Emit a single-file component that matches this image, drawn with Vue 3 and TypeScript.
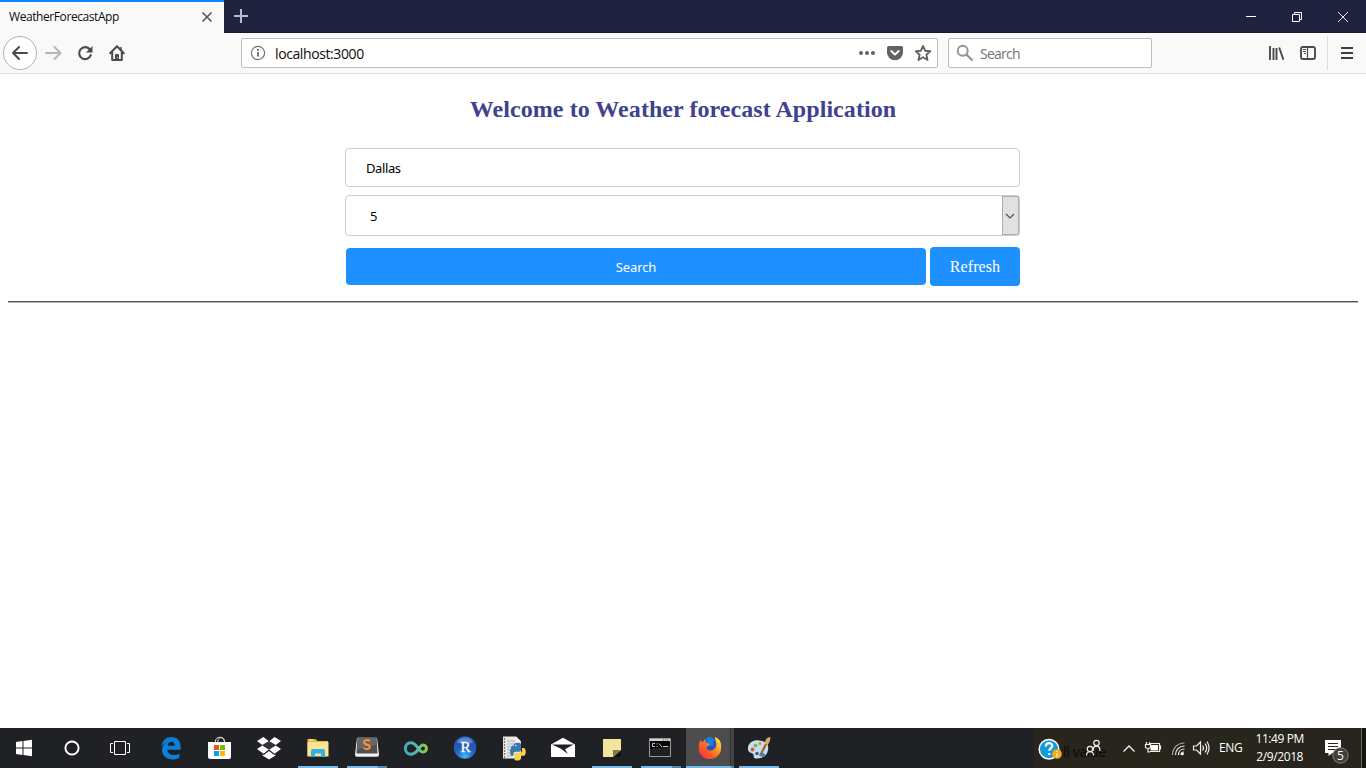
<script setup lang="ts">
import { ref } from 'vue'

interface TaskItem {
  name: string
  state?: 'open' | 'stacked' | 'active'
}

const city = ref('Dallas')
const days = ref('5')

const tasks: TaskItem[] = [
  { name: 'edge' },
  { name: 'store' },
  { name: 'dropbox' },
  { name: 'explorer', state: 'open' },
  { name: 'sublime', state: 'stacked' },
  { name: 'infinity' },
  { name: 'rstudio' },
  { name: 'python' },
  { name: 'mail' },
  { name: 'notes', state: 'open' },
  { name: 'terminal', state: 'stacked' },
  { name: 'firefox', state: 'active' },
  { name: 'paint', state: 'open' },
]
</script>

<template>
  <div class="screen">
    <header class="tabbar">
      <div class="tab">
        <span class="tab-title">WeatherForecastApp</span>
        <svg class="tab-close" width="12" height="12" viewBox="0 0 12 12"><path d="M1.500 1.500l9 9M10.500 1.500l-9 9" stroke="#55555a" stroke-width="1.600" /></svg>
      </div>
      <svg class="tab-new" width="32" height="33" viewBox="224 0 32 33"><path d="M234 16h14M241 9v14" stroke="#bcbcc6" stroke-width="2" /></svg>
      <svg class="window-buttons" width="138" height="33" viewBox="1228 0 138 33" fill="none" stroke="#fff">
        <path d="M1246 16.500h10M1292.500 14.500h7v7h-7zM1294.500 14.500v-2h7v7h-2" />
        <path d="M1338 12l10 10M1348 12l-10 10" stroke-width=".9" />
      </svg>
    </header>

    <nav class="toolbar">
      <svg class="nav-icons" width="241" height="40" viewBox="0 33 241 40" fill="none">
        <circle cx="20" cy="53" r="16.500" fill="#fff" stroke="#b1b1b3" />
        <path d="M27 53H13M19 47l-6 6 6 6" stroke="#4a4a4f" stroke-width="2" stroke-linejoin="round" stroke-linecap="round" />
        <path d="M46 53h14M54.500 47l6 6-6 6" stroke="#b5b5b7" stroke-width="2" stroke-linejoin="round" stroke-linecap="round" />
        <path d="M89.700 49.200A6 6 0 1 0 90.800 55.200" stroke="#4a4a4f" stroke-width="2.100" stroke-linecap="round" />
        <path d="M92.500 46v6.500h-6.500z" fill="#4a4a4f" />
        <path d="M110.200 53.200l6.800-6.900 6.800 6.900M112.200 52v8h9.600v-8" stroke="#4a4a4f" stroke-width="2" stroke-linejoin="round" stroke-linecap="round" />
        <path d="M115 61v-6q0-1 1-1h2q1 0 1 1v6z" fill="#4a4a4f" />
        <path d="M121 47v3" stroke="#4a4a4f" stroke-width="1.500" /><path d="M117 57.500h1" stroke="#ddd" />
      </svg>
      <div class="address">
        <svg width="32" height="28" viewBox="242 39 32 28"><circle cx="258" cy="53" r="6.600" fill="none" stroke="#737376" stroke-width="1.200" /><path d="M258 52v4.500M258 49v1.700" stroke="#666" stroke-width="1.800" /></svg>
        <span class="address-text">localhost:3000</span>
        <svg class="address-icons" width="87" height="28" viewBox="850 39 87 28">
          <g fill="#626266"><circle cx="861" cy="53" r="2" /><circle cx="867" cy="53" r="2" /><circle cx="873" cy="53" r="2" />
          <path d="M888.500 46h13q1.500 0 1.500 1.500v5a8 7.800 0 0 1-16 0v-5q0-1.500 1.500-1.500z" /></g>
          <path d="M891.300 51l3.700 3.600 3.700-3.600" fill="none" stroke="#fff" stroke-width="2" stroke-linecap="round" stroke-linejoin="round" />
          <path d="M923 46l2.100 4.700 5.100.6-3.800 3.400 1.100 5.300-4.500-2.700-4.500 2.700 1.100-5.300-3.800-3.400 5.100-.6z" fill="none" stroke="#626266" stroke-width="1.900" stroke-linejoin="round" />
        </svg>
      </div>
      <div class="searchbox">
        <svg width="31" height="28" viewBox="949 39 31 28" fill="none" stroke="#929295"><circle cx="962.700" cy="50.700" r="5" stroke-width="1.900" /><path d="M966.500 54.500l6 6" stroke-width="2.200" /></svg>
        <span>Search</span>
      </div>
      <svg class="right-icons" width="106" height="40" viewBox="1260 33 106 40">
        <path d="M1270 46v14M1273.500 48v12M1276.500 48v12M1279.200 47.500l4.200 12.300" fill="none" stroke="#4a4a4f" stroke-width="1.900" />
        <rect x="1301" y="47" width="14" height="12" rx="2" fill="none" stroke="#4a4a4f" stroke-width="1.900" />
        <path d="M1307.500 47v12" stroke="#4a4a4f" stroke-width="1.200" /><path d="M1303 49.500h3M1303 51.500h3M1304 53.500h2" stroke="#4a4a4f" />
        <path d="M1327.500 36v34" stroke="#dcdcdc" /><path d="M1341 48h12M1341 53h12M1341 58h12" stroke="#3e3e43" stroke-width="2" />
      </svg>
    </nav>

    <main class="page">
      <h2>Welcome to Weather forecast Application</h2>
      <form class="form" @submit.prevent>
        <input v-model="city" class="city" type="text" />
        <div class="select">
          <span>{{ days }}</span>
          <i class="select-arrow"><svg width="10" height="6" viewBox="0 0 10 6"><path d="M1 1l4 4 4-4" fill="none" stroke="#505050" stroke-width="1.200" /></svg></i>
        </div>
        <div class="actions">
          <button class="search" type="submit">Search</button>
          <a class="refresh">Refresh</a>
        </div>
      </form>
      <div class="rule"></div>
    </main>

    <footer class="taskbar">
      <svg class="system" width="147" height="40" viewBox="0 728 147 40">
        <path d="M16 742l6.500-1v6.500H16zM23.500 740.900l8.500-1.200v7.800h-8.500zM16 748.500h6.500v6.500l-6.500-1zM23.500 748.500h8.500v7.800l-8.500-1.200z" fill="#fff" />
        <circle cx="72" cy="748" r="6.600" fill="none" stroke="#fff" stroke-width="2" />
        <path d="M114.500 741.500h11v13h-11zM113 743.500h-2.500v9h2.500M127 743.500h2.500v9H127" fill="none" stroke="#fff" />
      </svg>
      <div v-for="task in tasks" :key="task.name" class="task" :class="task.state">
        <svg v-if="task.name === 'edge'" width="49" height="40" viewBox="147.7 728 49 40">
          <path d="M162 747c1-7 5-10 10-10 6 0 9.300 4 9.300 10v2.800h-13.200c.3 6 7.600 6.300 12 3.700v4.200c-8 4.200-17.300.5-17.300-7.500 0-4 2.600-7.200 6-8.600-3 .7-5 2.600-6.800 5.400zm6.200-1.300h7.200c0-5.700-6.500-5.100-7.200 0z" fill="#0a7fdb" />
        </svg>
        <svg v-else-if="task.name === 'store'" width="49" height="40" viewBox="196 728 49 40">
          <path d="M215.500 743v-2c0-5 9-5 9 0v2M218 743v-2c0-5 6-4 6 0" fill="none" stroke="#ddd" />
          <path d="M208 742h23v15q0 2-2 2h-19q-2 0-2-2z" fill="#fff" />
          <path d="M214 745h5v5h-5z" fill="#f25022" /><path d="M220 745h5v5h-5z" fill="#7fba00" /><path d="M214 751h5v5h-5z" fill="#00a4ef" /><path d="M220 751h5v5h-5z" fill="#ffb900" />
        </svg>
        <svg v-else-if="task.name === 'dropbox'" width="49" height="40" viewBox="245 728 49 40">
          <path d="M257 741l6.500-4 5.300 4.200-6.500 3.900zM281 741l-6.500-4-5.300 4.200 6.500 3.900zM257 749l5.300-3.500 6.500 4-5.300 4.200zM281 749l-5.300-3.500-6.500 4 5.300 4.200zM262.500 754.500l1.300.6 5.200-4.100 5.200 4.100 1.300-.6v1l-6.500 4-6.500-4z" fill="#fff" /><path d="M262.500 745.300l6.500-4 6.500 4-6.500 4z" fill="#33363a" />
        </svg>
        <svg v-else-if="task.name === 'explorer'" width="49" height="40" viewBox="294 728 49 40">
          <path d="M307.500 739h8l2 2h10.500v15h-20.500z" fill="#e8b63e" /><path d="M307.500 742h21v14.500h-21z" fill="#fde493" />
          <path d="M309 740h4" stroke="#fff4c0" /><path d="M311 757v-6q0-2 2-2h10q2 0 2 2v6h-4v-3.500h-6v3.500z" fill="#31b0e5" />
        </svg>
        <svg v-else-if="task.name === 'sublime'" width="49" height="40" viewBox="343 728 49 40">
          <path d="M357 738l-2 16.500q0 2.300 2 2.300h20q2 0 2-2.300l-2-16.500z" fill="#f1f1ef" /><path d="M357.500 737h19l1 16.500h-21z" fill="#505050" /><path d="M358 737.500h18l.4 7-19 5z" fill="#666" />
          <path d="M370.200 741c-3-1.700-6.200-1-6.200 1.100 0 3.300 6 1.900 5.900 4.900-.1 2.400-3.800 2.500-6.400 1" fill="none" stroke="#ff9434" stroke-width="2" />
        </svg>
        <svg v-else-if="task.name === 'infinity'" width="49" height="40" viewBox="392 728 49 40" fill="none" stroke-width="3">
          <defs><linearGradient id="loop"><stop stop-color="#42abc4" /><stop offset=".55" stop-color="#58bcae" /><stop offset="1" stop-color="#95c949" /></linearGradient></defs>
          <path d="M417 751c-2 2-3.600 3.300-6 3.300-7.500 0-7.500-11.600 0-11.600 6 0 7.500 9.300 12.200 9.300 4.300 0 4.300-7 0-7-2.400 0-4 3-6.200 6z" stroke="url(#loop)" />
        </svg>
        <svg v-else-if="task.name === 'rstudio'" width="49" height="40" viewBox="441 728 49 40">
          <defs><radialGradient id="ball" cx=".5" cy=".9"><stop stop-color="#49b9ff" /><stop offset=".55" stop-color="#2277d5" /><stop offset="1" stop-color="#2757b5" /></radialGradient></defs>
          <circle cx="465" cy="747.500" r="11.300" fill="url(#ball)" /><path d="M457 742c3-6 13-6 16 0-5 3-11 3-16 0z" fill="#71a6e3" opacity=".65" />
          <text x="465.500" y="752" text-anchor="middle" class="r-letter">R</text>
        </svg>
        <svg v-else-if="task.name === 'python'" width="49" height="40" viewBox="490 728 49 40">
          <path d="M503 736.500h13l5 5v17h-18z" fill="#e8e8e8" /><path d="M516 736.500v5h5z" fill="#fff" /><path d="M504.500 738v20" stroke="#777" stroke-width="1.200" stroke-dasharray="2 1" /><path d="M507 741h8M507 744h9M507 747h5M507 750h4M507 753h4M507 756h5" stroke="#b2b2b2" />
          <path d="M511 748c0-2 1-2.500 3-2.500v-1.800q4-2 7 0v6q0 2-2 2h-3.500q-2 0-2 2v2H511q-2-4 0-7.700z" fill="#397aae" /><path d="M522 748h2.500c2 3 1.500 5.700 0 7.700h-4v4q-4 1.700-6 0v-5q0-2 2-2h4q1.500 0 1.500-2z" fill="#ffd144" /><circle cx="515.800" cy="745.500" r=".7" fill="#fff" />
        </svg>
        <svg v-else-if="task.name === 'mail'" width="49" height="40" viewBox="539 728 49 40">
          <path d="M551 744.500l12-6.700 12 6.700V757h-24z" fill="#fff" /><path d="M552 744.500h21.500l-8.500 4.700 3 4.800-7-5.200z" fill="#202124" />
        </svg>
        <svg v-else-if="task.name === 'notes'" width="49" height="40" viewBox="588 728 49 40">
          <path d="M603 739h18v11l-8 7h-10z" fill="#f1e69c" /><path d="M613 750h8l-8 7z" fill="#807a4e" /><path d="M621 751v6h-7z" fill="#111315" />
        </svg>
        <svg v-else-if="task.name === 'terminal'" width="49" height="40" viewBox="637 728 49 40">
          <path d="M649.500 738.500h21v18h-21z" fill="#080808" stroke="#999" /><path d="M650 739h20v2h-20z" fill="#d2d2d2" /><path d="M663 740h6" stroke="#666" stroke-dasharray="1 1" /><path d="M650 749l20-3v10h-20z" fill="#202020" />
          <path d="M655 743.500h-2.500v3h2.500M657 743.500v1M657 746v1M659 743.500l3 3.500M663 746.500h5" fill="none" stroke="#d3d3d3" stroke-width=".9" />
        </svg>
        <svg v-else-if="task.name === 'firefox'" width="49" height="40" viewBox="686 728 49 40">
          <defs><linearGradient id="flame" x1="0" y1="1" x2="1" y2="0"><stop stop-color="#f2204f" /><stop offset=".45" stop-color="#ff6b20" /><stop offset=".8" stop-color="#ffc530" /><stop offset="1" stop-color="#fff044" /></linearGradient></defs>
          <circle cx="710" cy="747" r="9.500" fill="#2851b9" /><path d="M706 739c3-3 6-2 8 0l-1 7h-6z" fill="#167fe0" />
          <path d="M700.500 740l2 2.500 2.500-3.500 1 4 3.500 1c-.5 2.500-3 2.300-3.200 4 2 4.500 8.300 2.500 9.700-1.500 1.300-4-1.200-5.500-1-9.500 6 2.500 6.500 7 6 12-.5 6-5.500 10-11 10-7 0-11.300-5-11.300-10.500 0-3.700.5-6 1.800-8.500z" fill="url(#flame)" />
        </svg>
        <svg v-else width="49" height="40" viewBox="735 728 49 40">
          <path d="M748 747c1-5 7-8 14-6 5 1.500 7 4 6 9-1 6-6 9-12 8.500-4-.3-1-4-3.500-5-3-1-5-2-4.500-6.500z" fill="#c5dff1" />
          <circle cx="752.500" cy="749.500" r="1.900" fill="#e05445" /><circle cx="755.500" cy="745.500" r="1.800" fill="#72b944" /><circle cx="760" cy="743.500" r="1.700" fill="#e89437" /><circle cx="763" cy="755" r="2" fill="#397fbe" /><circle cx="757" cy="753.500" r="1.800" fill="#295f9c" />
          <path d="M766.500 743l-6.500 13" stroke="#a66325" stroke-width="2.200" /><path d="M765 744c-.5-4 2-7 5.500-7-.2 3-1 6-3 8z" fill="#dca96d" />
        </svg>
      </div>
      <div class="tray">
        <span class="ghost">ll value</span>
        <svg class="tray-icons" width="180" height="40" viewBox="1034 728 180 40" fill="none" stroke="#f0f0ed" stroke-width="1.200">
          <circle cx="1049" cy="749.200" r="9.800" fill="#159bd7" stroke="#fff" stroke-width="1.500" />
          <path d="M1045.800 746.500c0-4.500 6.500-4.300 6.500-.7 0 2.500-3.100 2.500-3.100 5M1049.200 753v2" stroke="#fff" stroke-width="2.200" />
          <circle cx="1057" cy="754" r="4.800" fill="#f5a91b" stroke="none" /><path d="M1057 751v1M1057 753v4" stroke="#fff" />
          <circle cx="1096.500" cy="743" r="2.700" /><path d="M1093 751c0-6.500 7-6.500 7 0" />
          <circle cx="1090" cy="749" r="2.700" /><path d="M1086.500 755.500c0-5 7-5 7 0" />
          <path d="M1123.500 751.500l5.500-5.500 5.500 5.500" stroke-width="1.400" />
          <path d="M1149 743.500h10.500v8H1149M1160.500 745.500v4" /><path d="M1150.500 745h7.500v5.500h-7.500z" fill="#fff" stroke="none" /><path d="M1145.500 744.500h5v3q-2.500 2-5 0zM1146.500 742v2.500M1149.500 742v2.500M1148 748.500v3.500h2" fill="#28251c" />
          <path d="M1172.500 755c0-7 5-12 12-12" opacity=".65" /><path d="M1175.500 755c0-5 3.500-9 9-9M1178.500 755c0-3 2-6 6-6M1181 755c0-1.500 1-3 3-3" /><circle cx="1182.500" cy="754" r="1.300" fill="#fff" stroke="none" />
          <path d="M1193.500 746h3l4-4v12l-4-4h-3zM1202.500 745.500q2 2.500 0 5M1205 743.500q3.300 4.500 0 9M1207 741.500q4 6.500 0 13" />
        </svg>
        <span class="lang">ENG</span>
        <div class="clock"><span>11:49 PM</span><span>2/9/2018</span></div>
        <svg class="notice" width="54" height="40" viewBox="1312 728 54 40">
          <path d="M1325 740h16v13h-8.500l-4 3v-3H1325z" fill="#fff" /><path d="M1328 743.500h10M1328 746.500h10M1328 749.500h7" stroke="#28251c" />
          <circle cx="1340.500" cy="755.500" r="7.700" fill="#414039" stroke="#85847d" /><text x="1340.500" y="759.500" text-anchor="middle" class="badge">5</text>
          <path d="M1361.500 728v40" stroke="#69675e" /><path d="M1362 728h4v40h-4z" fill="#15150f" />
        </svg>
      </div>
    </footer>
  </div>
</template>

<style>
body { margin: 0; overflow: hidden; }
</style>

<style scoped>
* { box-sizing: border-box; }
.screen { width: 1366px; height: 768px; display: flex; flex-direction: column; background: #fff; font-family: "Noto Sans", "Open Sans", sans-serif; }
svg { display: block; flex: none; }
.tabbar { height: 33px; display: flex; background: #202340; flex: none; border-bottom: 1px solid #151830; }
.tab { width: 224px; height: 33px; border-top: 2px solid #0a84ff; background: #f9f9fa; display: flex; align-items: center; padding: 0 11px 1px 9px; flex: none; }
.tab-title { font: 12px "Open Sans", sans-serif; letter-spacing: -.42px; color: #0c0c0d; padding-bottom: 1px; }
.tab-close { margin-left: auto; }
.window-buttons { margin-left: auto; }
.toolbar { height: 41px; display: flex; align-items: flex-start; background: #f9f9fa; border-bottom: 1px solid #dedede; flex: none; }
.address, .searchbox { height: 30px; margin-top: 5px; display: flex; align-items: center; border: 1px solid #bebebe; border-radius: 2px; background: #fff; font: 14px "Open Sans", sans-serif; letter-spacing: -.4px; }
.address { width: 697px; }
.address-text { padding-left: 1px; color: #0c0c0d; }
.address-icons { margin-left: auto; }
.searchbox { width: 204px; margin-left: 10px; color: #737373; letter-spacing: -.8px; letter-spacing: -.75px; }
.right-icons { margin-left: auto; }
.page { flex: 1; display: flex; flex-direction: column; padding: 0 8px; }
h2 { margin: 21px 0 25px; height: 28px; text-align: center; font: bold 24px/28px "Liberation Serif", serif; letter-spacing: .06px; color: #3f428f; }
.form { width: 675px; margin-left: 337px; display: flex; flex-direction: column; }
.city { height: 39px; border: 1px solid #ccc; border-radius: 4px; padding: 1px 20px 0; font: 13px "Noto Sans", sans-serif; letter-spacing: -.4px; color: #000; outline: none; }
.select { height: 41px; margin-top: 8px; border: 1px solid #ccc; border-radius: 4px; display: flex; align-items: center; padding-left: 24px; font-size: 13px; }
.select-arrow { margin-left: auto; width: 17px; height: 39px; display: flex; align-items: center; justify-content: flex-start; padding-left: 2px; background: #e1e1e1; border: 1px solid #adadad; }
.actions { display: flex; align-items: center; gap: 4px; margin-top: 11px; padding-left: 1px; }
.search { width: 580px; height: 37px; border: 0; border-radius: 4px; background: #1e90ff; color: #fff; font: 13px "Noto Sans", sans-serif; letter-spacing: -.1px; padding: 0; }
.refresh { width: 90px; height: 39px; border-radius: 4px; background: #1e90ff; color: #fff; font: 16px/39px "Liberation Serif", serif; letter-spacing: .1px; text-align: center; }
.rule { height: 2px; margin-top: 15px; border-top: 1px solid #555; border-bottom: 1px solid #b5b5b5; }
.taskbar { height: 40px; display: flex; background: #202124; flex: none; }
.task { width: 49px; height: 40px; position: relative; flex: none; }
.task.open::after, .task.stacked::after { content: ""; position: absolute; left: 4px; bottom: 0; width: 40px; height: 2px; background: #76b9ed; }
.task.stacked::after { background: linear-gradient(90deg, #76b9ed 31px, #5588b0 31px); }
.task.active { background: linear-gradient(90deg, #4d4d4f 44px, #303133 44px, #303133 45px, #454547 45px, #454547 48px, transparent 48px); }
.task.active::after { content: ""; position: absolute; left: 0; bottom: 0; width: 48px; height: 2px; background: linear-gradient(90deg, #76b9ed 45px, #5588b0 45px); }
.r-letter { font: 15px "Liberation Serif", serif; fill: #fff; stroke: #fff; stroke-width: .4px; }
.tray { position: relative; width: 332px; margin-left: auto; display: flex; background: #28251c; color: #fff; font: 12px "Open Sans", sans-serif; }
.ghost { position: absolute; left: 29px; top: 14px; font: 14px/20px "Noto Sans", sans-serif; letter-spacing: -.4px; color: #0d0c08; }
.tray-icons { position: relative; }
.lang { width: 32px; padding-left: 5px; line-height: 40px; letter-spacing: -.4px; white-space: nowrap; }
.clock { width: 66px; margin-left: 2px; display: flex; flex-direction: column; align-items: center; padding-top: 2px; line-height: 18px; letter-spacing: -.4px; white-space: nowrap; }
.notice { margin-left: auto; }
.badge { font: 12px "Open Sans", sans-serif; fill: #fff; }
</style>
